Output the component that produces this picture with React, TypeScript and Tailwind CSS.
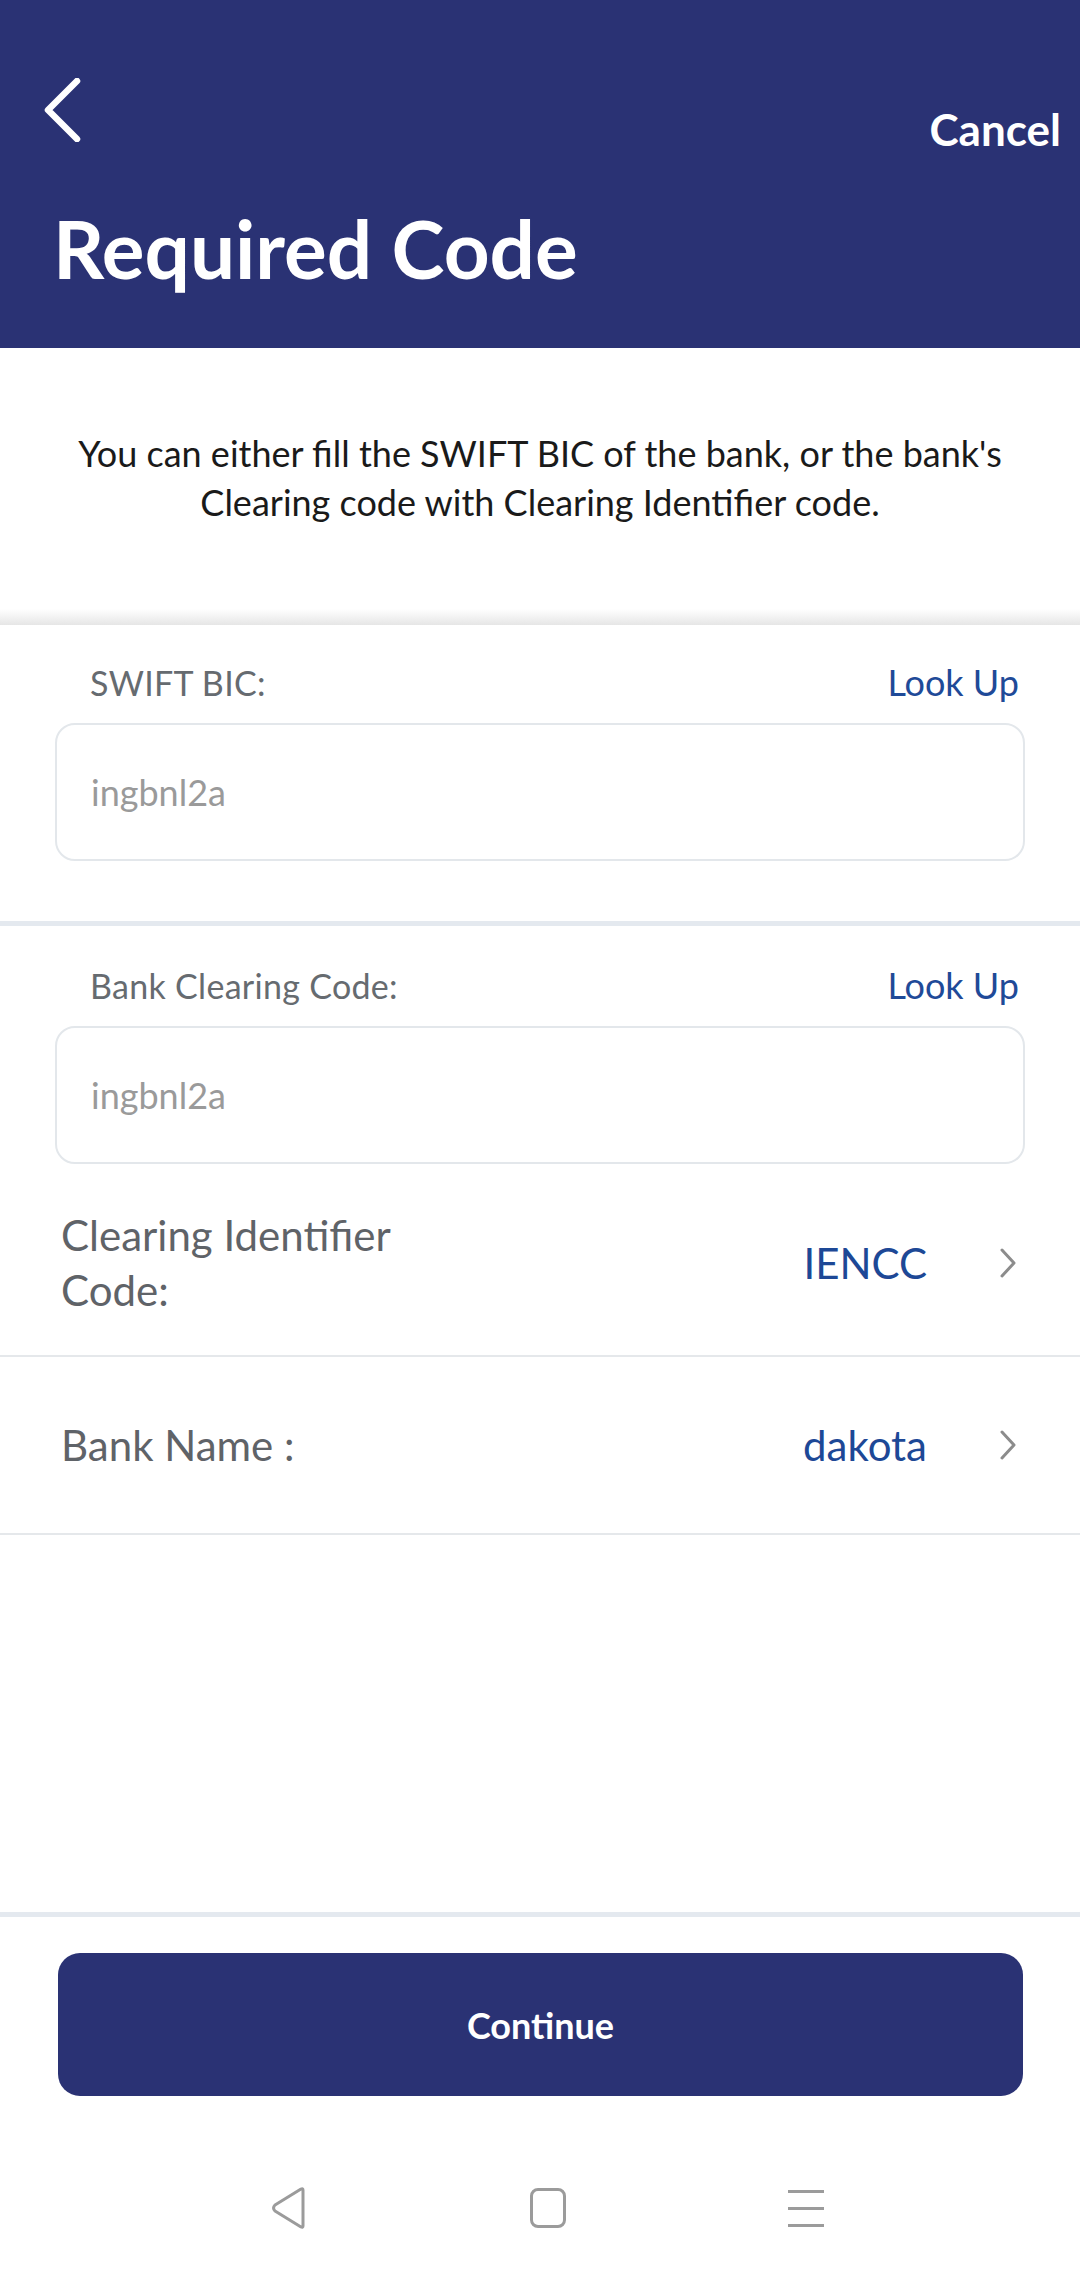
import React from 'react';

const font = { fontFamily: 'Lato, "Liberation Sans", sans-serif' };

const BackIcon = () => (
  <svg width="40" height="64" viewBox="0 0 40 64" fill="none">
    <path d="M34 3 L5 32 L34 61" stroke="white" strokeWidth="6.5" strokeLinecap="round" strokeLinejoin="round" />
  </svg>
);

const Chevron = () => (
  <svg width="18" height="30" viewBox="0 0 18 30" fill="none">
    <path d="M3 2 L15 15 L3 28" stroke="#8c8c8c" strokeWidth="3" strokeLinecap="round" strokeLinejoin="round" />
  </svg>
);

const CodeField: React.FC<{ label: string; value: string }> = ({ label, value }) => (
  <div className="px-[55px]">
    <div className="flex items-center justify-between h-[40px]">
      <span className="pl-[35px] text-[34px] tracking-[0.3px] text-[#666b70]">{label}</span>
      <span className="pr-[6px] text-[36px] text-[#1f4a98]">Look Up</span>
    </div>
    <div className="mt-[21px] h-[138px] rounded-[20px] border-2 border-[#e3e7eb] flex items-center pl-[34px] text-[36px] text-[#9a9a9a]">
      {value}
    </div>
  </div>
);

const SelectRow: React.FC<{ label: string; value: string; className: string }> = ({ label, value, className }) => (
  <div className={`flex items-center justify-between pl-[61px] pr-[63px] ${className}`}>
    <span className="max-w-[400px] text-[42px] leading-[55px] text-[#5f6368]">{label}</span>
    <div className="flex items-center gap-[72px]">
      <span className="text-[42px] text-[#1d4896]">{value}</span>
      <Chevron />
    </div>
  </div>
);

export default function App() {
  return (
    <div style={font} className="w-[1080px] h-[2274px] bg-white flex flex-col overflow-hidden">
      <header className="h-[348px] shrink-0 bg-[#2a3274] px-[43px] pt-[78px]">
        <div className="flex items-start justify-between">
          <BackIcon />
          <span className="mt-[18px] -mr-[24px] text-[44px] font-bold text-white">Cancel</span>
        </div>
        <h1 className="mt-[46px] ml-[10px] text-[80px] leading-none font-bold text-white">Required Code</h1>
      </header>

      <p className="pt-[81px] pb-[82px] px-[50px] text-center text-[36px] leading-[49px] text-[#1a1a1a]">
        You can either fill the SWIFT BIC of the bank, or the bank's Clearing code with Clearing Identifier code.
      </p>

      <div className="h-[16px] shrink-0 bg-gradient-to-b from-white to-[#e6e6e6]" />

      <div className="pt-[37px] pb-[60px]">
        <CodeField label="SWIFT BIC:" value="ingbnl2a" />
      </div>
      <div className="h-[5px] shrink-0 bg-[#e4e9ef]" />

      <div className="pt-[39px]">
        <CodeField label="Bank Clearing Code:" value="ingbnl2a" />
      </div>

      <SelectRow label="Clearing Identifier Code:" value="IENCC" className="pt-[44px] pb-[37px]" />
      <div className="h-[2px] shrink-0 bg-[#e5e8eb]" />
      <SelectRow label="Bank Name :" value="dakota" className="h-[176px]" />
      <div className="h-[2px] shrink-0 bg-[#e5e8eb]" />

      <div className="flex-1" />

      <div className="h-[5px] shrink-0 bg-[#e4e9ef]" />
      <div className="pt-[36px] pl-[58px] pr-[57px]">
        <button className="w-full h-[143px] rounded-[22px] bg-[#2a3274] text-white text-[36px] font-bold">
          Continue
        </button>
      </div>

      <nav className="h-[178px] shrink-0 flex items-center justify-center pt-[46px] pl-[16px]">
        <div className="w-[258px] flex justify-center">
          <svg width="40" height="44" viewBox="0 0 40 44" fill="none">
            <path d="M33 4 L33 40 Q33 42 31 41 L5 25 Q2 22 5 19 L31 3 Q33 2 33 4 Z" stroke="#9b9b9b" strokeWidth="3" strokeLinejoin="round" />
          </svg>
        </div>
        <div className="w-[258px] flex justify-center">
          <div className="w-[36px] h-[40px] rounded-[8px] border-[3px] border-[#9b9b9b]" />
        </div>
        <div className="w-[258px] flex justify-center">
          <div className="w-[36px] flex flex-col gap-[14px]">
            <div className="h-[3px] bg-[#9b9b9b]" />
            <div className="h-[3px] bg-[#9b9b9b]" />
            <div className="h-[3px] bg-[#9b9b9b]" />
          </div>
        </div>
      </nav>
    </div>
  );
}
